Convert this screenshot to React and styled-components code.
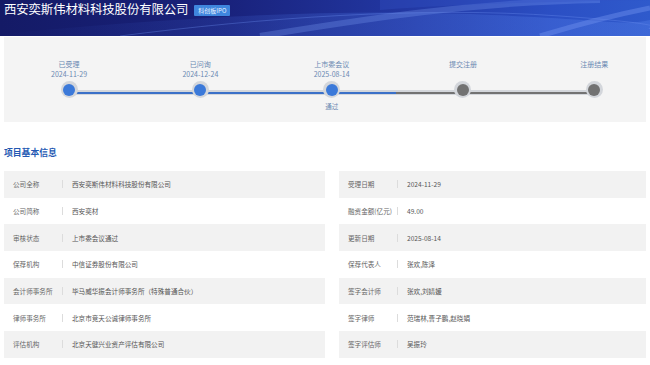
import React from "react";
import styled, { createGlobalStyle } from "styled-components";

const Global = createGlobalStyle`
  html, body { margin: 0; padding: 0; background: #fff; }
  body { font-family: "Noto Sans CJK SC", "Noto Sans", sans-serif; }
  * { box-sizing: border-box; }
`;

const Page = styled.div`
  width: 650px;
  height: 365px;
  overflow: hidden;
  background: #fff;
`;

const Header = styled.header`
  position: relative;
  height: 36px;
  background: linear-gradient(90deg, #141a66 0%, #19227c 35%, #2237a2 62%, #2b4fc4 85%, #2f5acc 100%);
  display: flex;
  align-items: flex-start;
  gap: 6px;
  padding: 2px 0 0 4px;
  overflow: hidden;
`;

const Waves = styled.svg`
  position: absolute;
  inset: 0;
  width: 100%;
  height: 100%;
`;

const Title = styled.h1`
  position: relative;
  margin: 0;
  font-size: 12.4px;
  line-height: 15px;
  font-weight: 400;
  color: #fff;
  letter-spacing: -0.1px;
`;

const Badge = styled.span`
  position: relative;
  margin-top: 3px;
  height: 11px;
  padding: 0 4px;
  background: #3f86de;
  color: #eaf2ff;
  font-size: 6px;
  line-height: 11px;
  border-radius: 1px;
`;

const ProgressPanel = styled.section`
  margin: 1px 4px 0 4px;
  height: 85px;
  background: #f4f4f4;
  padding-top: 23px;
`;

const Steps = styled.div`
  position: relative;
  display: grid;
  grid-template-columns: repeat(5, 131.3px);
  margin-left: -0.6px;
`;

const Track = styled.div`
  position: absolute;
  left: 65px;
  width: 525px;
  top: 30px;
  height: 5px;
  background: #d3d6db;
  border-radius: 3px;
  &::after {
    content: "";
    position: absolute;
    left: 0;
    right: 0;
    top: 1.5px;
    height: 2px;
    background: linear-gradient(90deg, #3a70c8 0%, #3a70c8 62.4%, #727272 62.4%, #727272 100%);
  }
`;

const Step = styled.div`
  position: relative;
  display: flex;
  flex-direction: column;
  align-items: center;
  z-index: 1;
`;

const StepLabel = styled.div`
  font-size: 7px;
  line-height: 9.5px;
  color: #6a88b2;
  height: 19px;
  text-align: center;
`;

const Node = styled.div`
  margin-top: 2px;
  width: 17px;
  height: 17px;
  border-radius: 50%;
  background: #d3d6db;
  display: flex;
  align-items: center;
  justify-content: center;
  &::after {
    content: "";
    width: 12px;
    height: 12px;
    border-radius: 50%;
    background: ${(p) => (p.$done ? "#3b79d9" : "#727272")};
  }
`;

const StepNote = styled.div`
  margin-top: 4px;
  font-size: 6.5px;
  line-height: 9px;
  color: #6a88b2;
  height: 9px;
`;

const SectionTitle = styled.h2`
  margin: 25px 0 0 4px;
  font-size: 8.8px;
  line-height: 12px;
  font-weight: 700;
  color: #2358b2;
`;

const Tables = styled.div`
  display: grid;
  grid-template-columns: 321px 307px;
  column-gap: 14px;
  margin: 12px 0 0 4px;
`;

const Table = styled.div`
  display: flex;
  flex-direction: column;
`;

const Row = styled.div`
  height: 26.7px;
  display: flex;
  align-items: center;
  background: ${(p) => (p.$shaded ? "#f2f2f2" : "#fff")};
  font-size: 6.6px;
  color: #666;
`;

const Label = styled.div`
  width: ${(p) => p.$w}px;
  padding-left: 9px;
  flex-shrink: 0;
  white-space: nowrap;
`;

const Sep = styled.div`
  width: 1px;
  height: 8px;
  background: #dcdcdc;
  margin-right: 9px;
`;

const Value = styled.div`
  color: #555;
  white-space: nowrap;
`;

const steps = [
  { name: "已受理", date: "2024-11-29", done: true },
  { name: "已问询", date: "2024-12-24", done: true },
  { name: "上市委会议", date: "2025-08-14", done: true, note: "通过" },
  { name: "提交注册", date: "", done: false },
  { name: "注册结果", date: "", done: false },
];

const left = [
  ["公司全称", "西安奕斯伟材料科技股份有限公司"],
  ["公司简称", "西安奕材"],
  ["审核状态", "上市委会议通过"],
  ["保荐机构", "中信证券股份有限公司"],
  ["会计师事务所", "毕马威华振会计师事务所（特殊普通合伙）"],
  ["律师事务所", "北京市竞天公诚律师事务所"],
  ["评估机构", "北京天健兴业资产评估有限公司"],
];

const right = [
  ["受理日期", "2024-11-29"],
  ["融资金额(亿元)", "49.00"],
  ["更新日期", "2025-08-14"],
  ["保荐代表人", "张欢,陈泽"],
  ["签字会计师", "张欢,刘婧媛"],
  ["签字律师", "范瑞林,曹子鹏,赵晓娟"],
  ["签字评估师", "吴振玲"],
];

export default function App() {
  return (
    <Page>
      <Global />
      <Header>
        <Waves viewBox="0 0 650 36" preserveAspectRatio="none">
          <defs>
            <linearGradient id="wg" x1="0" x2="1" y1="0" y2="0">
              <stop offset="0" stopColor="#3d5fd6" stopOpacity="0" />
              <stop offset="0.5" stopColor="#4a72e0" stopOpacity="0.45" />
              <stop offset="1" stopColor="#5a86ee" stopOpacity="0.6" />
            </linearGradient>
          </defs>
          <path d="M0 34 C 150 20, 320 8, 470 14 S 620 26, 650 20 L650 36 L0 36 Z" fill="url(#wg)" opacity="0.55" />
          <path d="M120 36 C 260 18, 420 6, 560 16 S 640 30, 650 28" stroke="#6d8ff0" strokeOpacity="0.35" fill="none" strokeWidth="1" />
          <path d="M260 36 C 360 20, 470 2, 600 0" stroke="#7a9bf2" strokeOpacity="0.3" fill="none" strokeWidth="6" />
          <path d="M540 36 C 580 24, 620 14, 650 8" stroke="#6e90ee" strokeOpacity="0.45" fill="none" strokeWidth="5" />
          <path d="M380 10 C 460 4, 540 2, 650 0 L650 0 L380 0 Z" fill="#3452c6" opacity="0.35" />
        </Waves>
        <Title>西安奕斯伟材料科技股份有限公司</Title>
        <Badge>科创板IPO</Badge>
      </Header>
      <ProgressPanel>
        <Steps>
          <Track />
          {steps.map((s) => (
            <Step key={s.name}>
              <StepLabel>
                {s.name}
                <br />
                {s.date}
              </StepLabel>
              <Node $done={s.done} />
              <StepNote>{s.note || ""}</StepNote>
            </Step>
          ))}
        </Steps>
      </ProgressPanel>
      <SectionTitle>项目基本信息</SectionTitle>
      <Tables>
        <Table>
          {left.map(([k, v], i) => (
            <Row key={k} $shaded={i % 2 === 0}>
              <Label $w={58}>{k}</Label>
              <Sep />
              <Value>{v}</Value>
            </Row>
          ))}
        </Table>
        <Table>
          {right.map(([k, v], i) => (
            <Row key={k} $shaded={i % 2 === 0}>
              <Label $w={58}>{k}</Label>
              <Sep />
              <Value>{v}</Value>
            </Row>
          ))}
        </Table>
      </Tables>
    </Page>
  );
}
